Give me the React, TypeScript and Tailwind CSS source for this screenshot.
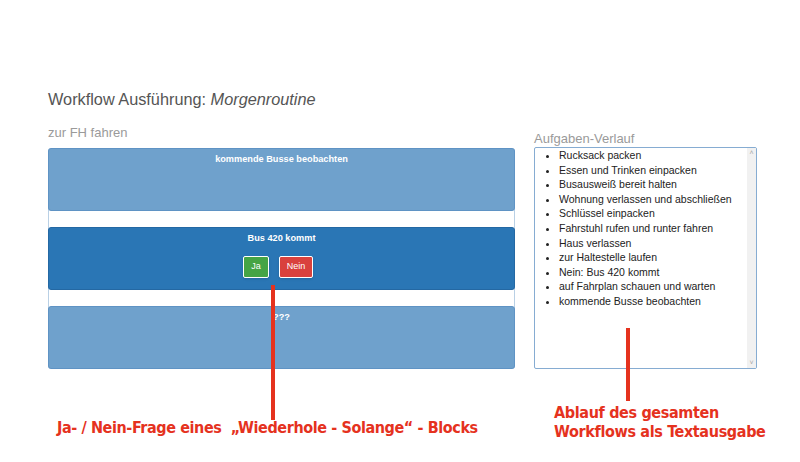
import React from "react";

const history = [
  "Rucksack packen",
  "Essen und Trinken einpacken",
  "Busausweiß bereit halten",
  "Wohnung verlassen und abschließen",
  "Schlüssel einpacken",
  "Fahrstuhl rufen und runter fahren",
  "Haus verlassen",
  "zur Haltestelle laufen",
  "Nein: Bus 420 kommt",
  "auf Fahrplan schauen und warten",
  "kommende Busse beobachten",
];

const sans = "font-['Liberation_Sans',Arial,sans-serif]";
const note =
  "font-['Liberation_Sans_Narrow','DejaVu_Sans_Condensed',sans-serif] font-bold text-[#e5321e]";

function Block({ title, active, children }: { title: string; active?: boolean; children?: React.ReactNode }) {
  return (
    <div
      className={
        "-mx-px h-[63px] rounded-[3px] border pt-[4.5px] text-center " +
        (active ? "border-[#2468a3] bg-[#2a76b5]" : "border-[#5f93c4] bg-[#6fa1cc]")
      }
    >
      <div className="text-[9.2px] font-bold leading-[11px] text-white">{title}</div>
      {children}
    </div>
  );
}

export default function App() {
  return (
    <div className={"relative h-[462px] w-[800px] overflow-hidden bg-white pl-[48px] pt-[90px] " + sans}>
      {/* Header */}
      <h1 className="text-[16.3px] leading-[18px] text-[#555555]">
        Workflow Ausführung: <em>Morgenroutine</em>
      </h1>

      <div className="mt-[16.5px] flex items-start gap-[19px]">
        {/* Workflow blocks */}
        <div className="w-[467px]">
          <div className="text-[13px] leading-[15px] text-[#9a9a9a]">zur FH fahren</div>
          <div className="mt-[8.5px] flex flex-col gap-[16px] rounded-[3px] border-x border-[#b9d0e5]">
            <Block title="kommende Busse beobachten" />
            <Block title="Bus 420 kommt" active>
              <div className="mt-[12.5px] flex justify-center gap-[10px] pr-[7px]">
                <button className="h-[22px] w-[26px] rounded-[2px] border border-white bg-[#45a445] text-[9px] text-white shadow-sm">
                  Ja
                </button>
                <button className="h-[22px] w-[34px] rounded-[2px] border border-white bg-[#d9413d] text-[9px] text-white shadow-sm">
                  Nein
                </button>
              </div>
            </Block>
            <Block title="???" />
          </div>
        </div>

        {/* History */}
        <div className="w-[223px] pt-[6.5px]">
          <div className="text-[13px] leading-[15px] text-[#9a9a9a]">Aufgaben-Verlauf</div>
          <div className="mt-px flex h-[222px] rounded-[2px] border border-[#86acd2]">
            <ul className="flex-1 list-disc pl-[24px] text-[10.5px] leading-[14.6px] text-[#222222]">
              {history.map((item) => (
                <li key={item}>{item}</li>
              ))}
            </ul>
            <div className="flex w-[9px] flex-col items-center justify-between bg-[#f1f1f1] py-[1px] text-[7px] leading-[8px] text-[#a8a8a8]">
              <span>˄</span>
              <span>˅</span>
            </div>
          </div>
        </div>
      </div>

      {/* Annotations */}
      <div className="absolute left-[271px] top-[285px] h-[135px] w-[4px] bg-[#e5321e]" />
      <div className="absolute left-[626px] top-[328px] h-[73px] w-[4px] bg-[#e5321e]" />
      <div className={"absolute left-[57px] top-[418px] whitespace-pre text-[16px] leading-[19px] tracking-[-0.4px] " + note}>
        {"Ja- / Nein-Frage eines  „Wiederhole - Solange“ - Blocks"}
      </div>
      <div className={"absolute left-[554px] top-[403px] text-[16px] leading-[19px] tracking-[-0.35px] " + note}>
        <div>Ablauf des gesamten</div>
        <div>Workflows als Textausgabe</div>
      </div>
    </div>
  );
}
